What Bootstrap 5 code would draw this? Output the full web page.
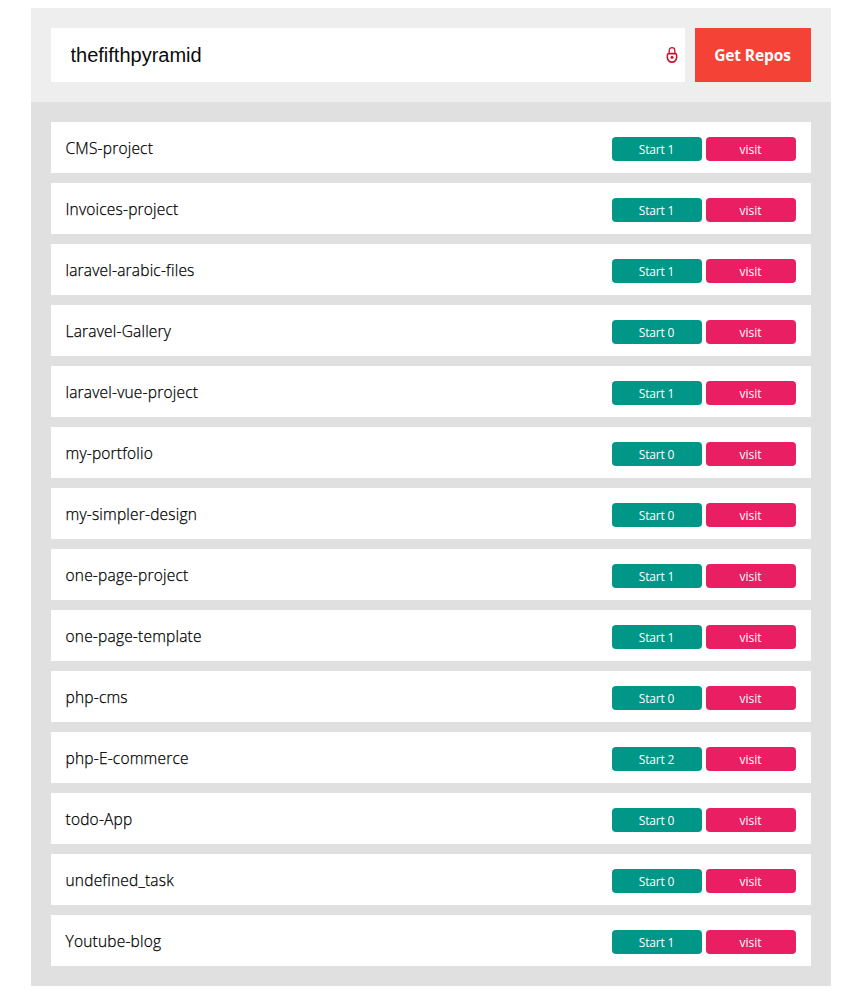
<!DOCTYPE html>
<html lang="en">
<head>
<meta charset="utf-8">
<meta name="viewport" content="width=device-width, initial-scale=1">
<title>Get Repos</title>
<link rel="stylesheet" href="https://cdn.jsdelivr.net/npm/bootstrap@5.3.0/dist/css/bootstrap.min.css">
<style>
body { font-family: "Open Sans", "Noto Sans", sans-serif; font-size: 16px; color: #000; background: #fff; font-variant-ligatures: none; }
.repo-app { width: 800px; margin-top: 8px; }
.repo-form { background: #eee; padding: 20px; gap: 10px; height: 94px; }
.user-field { background: #fff; height: 54px; padding-right: 7px; }
.user-field .form-control { font: 20px/24px "Liberation Sans", Arial, sans-serif; color: #0b0b0b; padding: 15px 0 15px 20px; box-shadow: none; background: transparent; }
.get-button { background: #f44336; color: #fff; width: 116px; height: 54px; font-weight: 700; font-size: 15.5px; line-height: 55px; letter-spacing: -.1px; }
.show-data { background: #e0e0e0; padding: 20px; gap: 10px; }
.repo-box { background: #fff; height: 51px; padding: 15px; }
.repo-name { font-weight: 300; font-size: 15.5px; line-height: 23px; letter-spacing: .2px; -webkit-text-stroke: .25px #000; }
.repo-pill { width: 90px; height: 24px; border-radius: 4px; color: #fff; font-size: 12px; line-height: 25px; text-align: center; text-decoration: none; }
.repo-stars { background: #009688; letter-spacing: -.2px; }
.repo-visit { background: #e91e63; }
</style>
</head>
<body>
<main class="repo-app mx-auto">
  <form class="repo-form d-flex">
    <div class="user-field d-flex align-items-center flex-grow-1">
      <input class="form-control border-0 rounded-0" type="text" value="thefifthpyramid" aria-label="Username" spellcheck="false">
      <svg class="flex-shrink-0" width="12" height="18" viewBox="0 0 12 18" fill="none" stroke="#c8142f" aria-hidden="true">
        <path d="M3.200 7.300V4.500A2.800 2.800 0 0 1 8.800 4.500V7.300" stroke-width="1.300"/>
        <path d="M2.200 7.600H9.800Q10.900 8.900 10.700 11.300C10.300 14.300 8.200 16.100 6 16.100S1.700 14.300 1.300 11.300Q1.100 8.900 2.200 7.600Z" stroke-width="1.600" stroke-linejoin="round"/>
        <circle cx="6" cy="11.200" r="1.500" fill="#c8142f" stroke="none"/>
      </svg>
    </div>
    <button class="get-button btn border-0 rounded-0 p-0" type="button">Get Repos</button>
  </form>
  <section class="show-data d-flex flex-column" id="repos"></section>
</main>
<script src="https://cdn.jsdelivr.net/npm/bootstrap@5.3.0/dist/js/bootstrap.bundle.min.js"></script>
<script>
const repos = [
  ["CMS-project", 1], ["Invoices-project", 1], ["laravel-arabic-files", 1], ["Laravel-Gallery", 0],
  ["laravel-vue-project", 1], ["my-portfolio", 0], ["my-simpler-design", 0], ["one-page-project", 1],
  ["one-page-template", 1], ["php-cms", 0], ["php-E-commerce", 2], ["todo-App", 0],
  ["undefined_task", 0], ["Youtube-blog", 1]
];
document.getElementById("repos").innerHTML = repos.map(([name, stars]) => `
  <div class="repo-box d-flex justify-content-between align-items-start">
    <span class="repo-name">${name}</span>
    <div class="d-flex gap-1">
      <span class="repo-pill repo-stars">Start ${stars}</span>
      <a class="repo-pill repo-visit" href="#">visit</a>
    </div>
  </div>`).join("");
</script>
</body>
</html>
